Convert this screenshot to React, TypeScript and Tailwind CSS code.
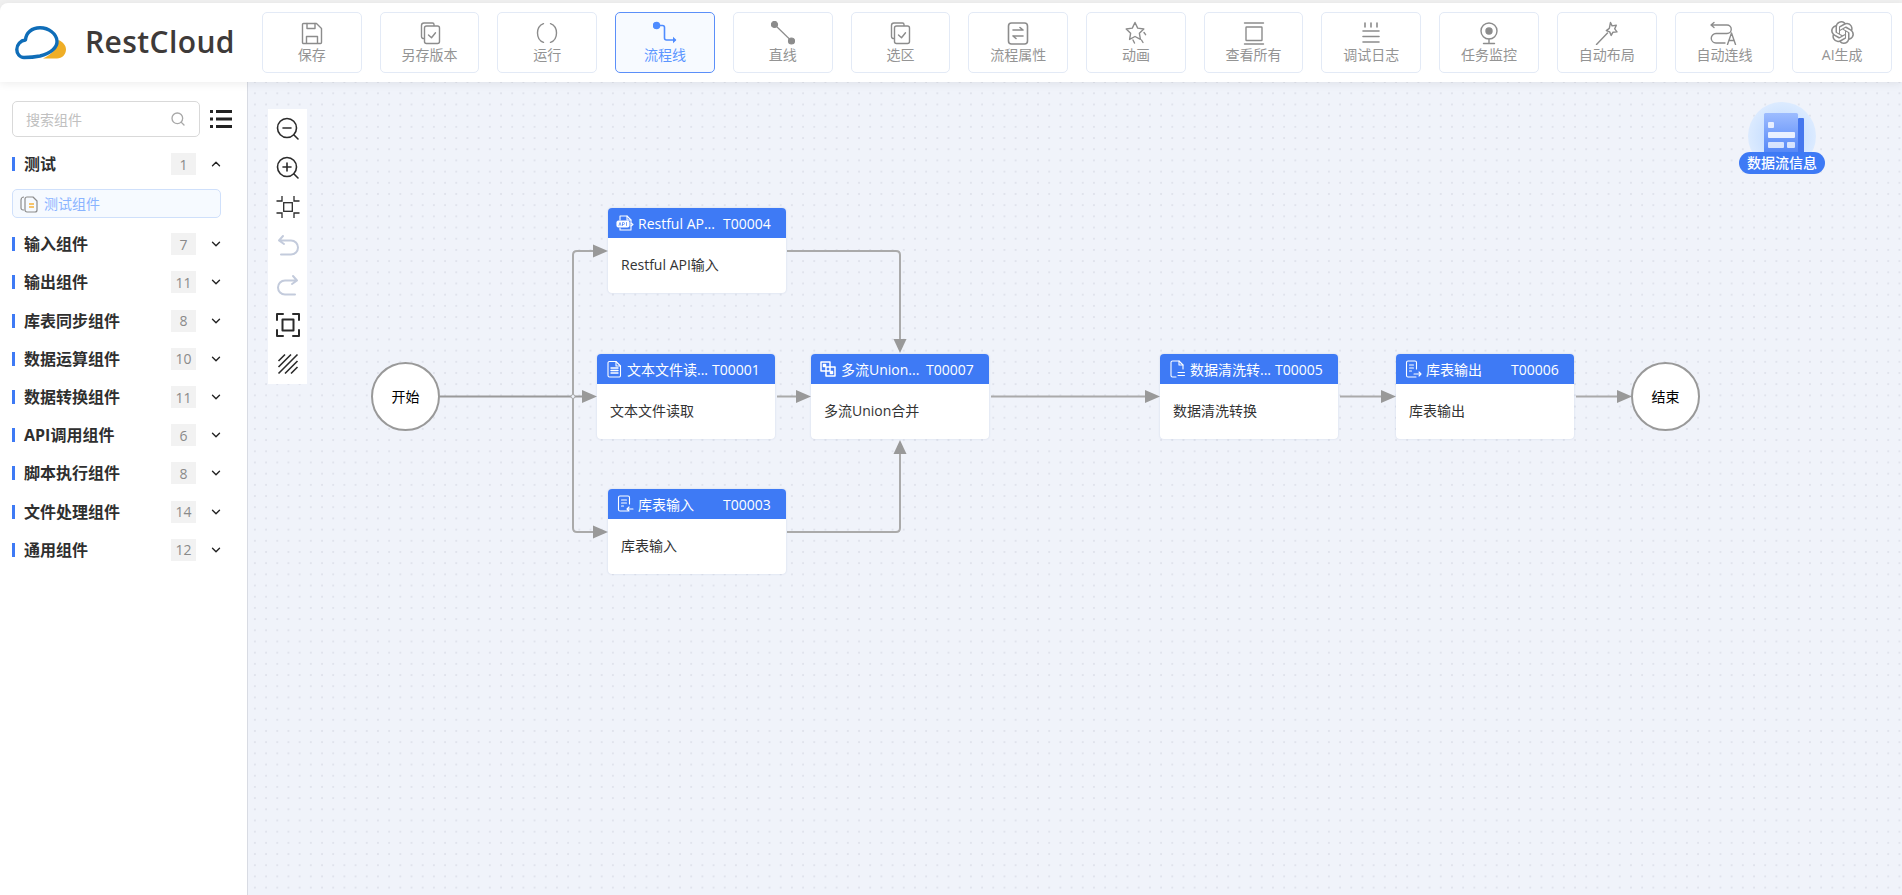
import React from "react";
import { SiOpenai } from "react-icons/si";
import { Search, ChevronUp, ChevronDown } from "lucide-react";

const G = "#8c8c8c";
const S = ({ children, size = 24, sw = 1.4, c = G }: { children: React.ReactNode; size?: number; sw?: number; c?: string }) => (
  <svg width={size} height={size} viewBox="0 0 24 24" fill="none" stroke={c} strokeWidth={sw} strokeLinecap="round" strokeLinejoin="round">
    {children}
  </svg>
);

const tools: { label: string; active?: boolean; icon: React.ReactNode }[] = [
  { label: "保存", icon: <S><path d="M2.5 3.5a1 1 0 0 1 1-1h13l5 5v14a1 1 0 0 1-1 1h-17a1 1 0 0 1-1-1z" /><path d="M7 2.5v5h8v-5M6.5 22v-6.5h11V22" /></S> },
  { label: "另存版本", icon: <S><path d="M16 4.5V3.5a1.5 1.5 0 0 0-1.5-1.5H6A2.5 2.5 0 0 0 3.5 4.5v11A2 2 0 0 0 6 17.5" /><rect x="6.5" y="5" width="15" height="17.5" rx="2" /><path d="M10.5 14l3 2.8 4-5" /></S> },
  { label: "运行", icon: <S><path d="M8.5 2.6C4.8 4 2.5 7.6 2.5 12s2.3 8 6 9.4M15.5 2.6c3.7 1.4 6 5 6 9.4s-2.3 8-6 9.4" /></S> },
  { label: "流程线", active: true, icon: <svg width="24" height="24" viewBox="0 0 24 24" fill="none" stroke="#4f8cff" strokeWidth="1.6" strokeLinecap="round" strokeLinejoin="round"><circle cx="3.5" cy="4.5" r="3" fill="#4f8cff" /><path d="M6 4.5h3.5a2 2 0 0 1 2 2V17a2 2 0 0 0 2 2H22" /><path d="M20 15.8v6.4l3.4-3.2z" fill="#4f8cff" stroke="none" /></svg> },
  { label: "直线", icon: <svg width="24" height="24" viewBox="0 0 24 24" fill={G} stroke={G} strokeWidth="1.2"><circle cx="3.5" cy="3.5" r="3" /><circle cx="20.5" cy="20" r="3" /><path d="M3.5 3.5 20.5 20" /></svg> },
  { label: "选区", icon: <S><path d="M16 4.5V3.5a1.5 1.5 0 0 0-1.5-1.5H6A2.5 2.5 0 0 0 3.5 4.5v11A2 2 0 0 0 6 17.5" /><rect x="6.5" y="5" width="15" height="17.5" rx="2" /><path d="M10.5 14l3 2.8 4-5" /></S> },
  { label: "流程属性", icon: <S sw={1.6}><rect x="2.5" y="2" width="19" height="21" rx="3" /><path d="M7 9h10M14 6.5 17 9M7 15h10M10 17.5 7 15" /></S> },
  { label: "动画", icon: <S><path d="M11 1.5l2.7 5.6 6.1.9-4.4 4.3 1 6.1-5.4-2.9-5.4 2.9 1-6.1L2.2 8l6.1-.9z" /><path d="M20 11.5l1.6 2.2M17.5 19l1.5 2.5M9 19l1.5 3" /></S> },
  { label: "查看所有", icon: <S><path d="M2.5 2h19M2.5 23h19" /><rect x="4" y="6" width="16" height="13.5" rx="0.5" /></S> },
  { label: "调试日志", icon: <S sw={1.6}><path d="M6 2v4M12 2v4M18 2v4M4 10h16M4 15.5h16M4 21h16" /></S> },
  { label: "任务监控", icon: <S><circle cx="12" cy="10" r="8" /><circle cx="12" cy="10" r="3" fill={G} /><path d="M12 18v4M6.5 22.5h11" /></S> },
  { label: "自动布局", icon: <S><path d="M1.5 23.5 12.5 12" /><path d="M15.5 1.5l1.6 3.4 4.2-.6-1.6 3.6 2.3 3-4 .3-1.8 3.2-1.5-3.5-3.4-1.3 3-2.2z" /></S> },
  { label: "自动连线", icon: <svg width="28" height="24" viewBox="0 0 28 24" fill="none" stroke={G} strokeWidth="1.4" strokeLinecap="round" strokeLinejoin="round"><path d="M4 1.5 1 4l3 2.5M1 4h16a4.2 4.2 0 0 1 0 8.5H6a4.7 4.7 0 0 0 0 9.5h9" /><path d="M17.5 23.5l4-11.5 4 11.5M19 19.5h5" /></svg> },
  { label: "AI生成", icon: <SiOpenai size={23} color={G} /> },
];

const groups: { name: string; n: number; open?: boolean }[] = [
  { name: "测试", n: 1, open: true },
  { name: "输入组件", n: 7 },
  { name: "输出组件", n: 11 },
  { name: "库表同步组件", n: 8 },
  { name: "数据运算组件", n: 10 },
  { name: "数据转换组件", n: 11 },
  { name: "API调用组件", n: 6 },
  { name: "脚本执行组件", n: 8 },
  { name: "文件处理组件", n: 14 },
  { name: "通用组件", n: 12 },
];

const D = "#2b2b2b";
const canvasTools: React.ReactNode[] = [
  <S sw={1.6} c={D}><circle cx="11" cy="11" r="9.5" /><path d="M7 11h8M18 18l4 4" /></S>,
  <S sw={1.6} c={D}><circle cx="11" cy="11" r="9.5" /><path d="M7 11h8M11 7v8M18 18l4 4" /></S>,
  <svg width="24" height="24" viewBox="0 0 24 24" fill="none" stroke={D} strokeWidth="1.300"><rect x="7.700" y="7.700" width="8.600" height="8.600" /><path d="M6 1v5H0.500M18 1v5h5.500M6 23v-5H0.500M18 23v-5h5.500" /></svg>,
  <S sw={2} c="#c3cbdc"><path d="M7 2 3 6.500 8 10M3.500 6.500H15a6.500 6.500 0 0 1 0 14H5" /></S>,
  <S sw={2} c="#c3cbdc"><path d="M17 2l4 4.500L16 10M20.500 6.500H9a6.500 6.500 0 0 0 0 14h10" /></S>,
  <S sw={2} c={D}><rect x="6.500" y="6.500" width="11" height="11" /><path d="M7 1H1v6M17 1h6v6M7 23H1v-6M17 23h6v-6" /></S>,
  <svg width="24" height="24" viewBox="0 0 24 24" fill="none" stroke={D} strokeWidth="1.600"><path d="M2.500 9 9 2.500M2.500 15 15 2.500M2.500 21.500 21.500 2.500M9 21.500 21.500 9M15 21.500 21.500 15" /></svg>,
];

const W = "#ffffff";
const NI = ({ children }: { children: React.ReactNode }) => (
  <svg width="18" height="18" viewBox="0 0 18 18" fill="none" stroke={W} strokeWidth="1.1" strokeLinecap="round" strokeLinejoin="round">{children}</svg>
);
const nodes = [
  { pos: "left-[360px] top-[126px]", title: "Restful AP...", id: "T00004", body: "Restful API输入", icon: <NI><path d="M4 6V2h7l4 4v10H4v-2" /><rect x="1" y="7" width="12" height="6" rx="1.500" fill={W} /><path d="M11 2v4h4" /><path d="M15 9l2 1.500-2 1.500" /><path d="M3 11.500 4 8.500l1 3M6.500 11.500v-3h1a1 1 0 0 1 0 2h-1M10.500 8.500v3" stroke="#3e7af5" strokeWidth="0.7" /></NI> },
  { pos: "left-[349px] top-[272px]", title: "文本文件读...", id: "T00001", body: "文本文件读取", icon: <NI><path d="M3 3a1.500 1.500 0 0 1 1.500-1.500H11L15.500 6v9.500A1.500 1.500 0 0 1 14 17H4.500A1.500 1.500 0 0 1 3 15.500z" /><path d="M11 1.500V6h4.500" /><path d="M6 8h7M6 10.500h7M6 13h7" strokeWidth="1.400" /></NI> },
  { pos: "left-[563px] top-[272px]", title: "多流Union...", id: "T00007", body: "多流Union合并", icon: <svg width="18" height="18" viewBox="0 0 18 18" fill="none" stroke={W} strokeWidth="1.500" strokeLinejoin="round"><path d="M2 2h9v5h5v9H7v-5H2z" /><path d="M7 7h4v4H7z" /><rect x="4.500" y="4.500" width="2" height="2" fill={W} /><rect x="11.500" y="11.500" width="2" height="2" fill={W} /></svg> },
  { pos: "left-[360px] top-[407px]", title: "库表输入", id: "T00003", body: "库表输入", icon: <NI><path d="M12 16H4a1.500 1.500 0 0 1-1.500-1.500v-12A1.500 1.500 0 0 1 4 1h8a1.500 1.500 0 0 1 1.500 1.500V9" /><path d="M5.500 5h5M5.500 8h5M5.500 11h2M17 14h-6M13 12l-2 2 2 2" /></NI> },
  { pos: "left-[912px] top-[272px]", title: "数据清洗转...", id: "T00005", body: "数据清洗转换", icon: <NI><path d="M8 17H4.500A1.500 1.500 0 0 1 3 15.500v-13A1.500 1.500 0 0 1 4.500 1H11l4 4v4" /><path d="M11 1v4h4M10 12.500h6.500M10 15.500h6.500" /></NI> },
  { pos: "left-[1148px] top-[272px]", title: "库表输出", id: "T00006", body: "库表输出", icon: <NI><path d="M12 17H4a1.500 1.500 0 0 1-1.500-1.500v-13A1.500 1.500 0 0 1 4 1h7a1.500 1.500 0 0 1 1.500 1.500V9" /><path d="M5.500 5h4M5.500 8h4M5.500 11h2M10 14h7M15 12l2 2-2 2" /></NI> },
];

const A = "#999999";
const arrows = [
  "M345 162.500 360 169 345 175.500z",
  "M334 308 349 314.500 334 321z",
  "M345 443.500 360 450 345 456.500z",
  "M645.500 257 652 271 658.500 257z",
  "M645.500 372 652 358 658.500 372z",
  "M548 308 563 314.500 548 321z",
  "M897 308 912 314.500 897 321z",
  "M1133 308 1148 314.500 1133 321z",
  "M1369 308 1384 314.500 1369 321z",
];
const lines = [
  "M192 314.500H335",
  "M325 314.500V173Q325 169 329 169H346",
  "M325 314.500V446Q325 450 329 450H346",
  "M539 169H648Q652 169 652 173V258",
  "M539 450H648Q652 450 652 446V371",
  "M529 314.500H549",
  "M743 314.500H898",
  "M1092 314.500H1134",
  "M1328 314.500H1370",
];

export default function App() {
  return (
    <div className="flex h-screen w-full flex-col overflow-hidden bg-[#f0f0f0] pt-[3px] font-['Open_Sans','Noto_Sans_CJK_SC',sans-serif]">
      <header className="relative z-10 flex h-[79px] shrink-0 items-center rounded-tl-lg bg-white pr-[10px] shadow-[0_2px_8px_rgba(0,0,0,0.07)]">
        <div className="flex w-[262px] shrink-0 items-center pl-[15px]">
          <svg width="52" height="34" viewBox="0 0 52 34" className="shrink-0">
            <path d="M28 32.500H42C47 32.500 51 28.500 51 23.500C51 19.500 48 15.800 43.500 14C43 22 36 29 28 32.500Z" fill="#efae26" />
            <path d="M9 31.500C4.500 31.500 1.800 27.500 1.800 23.500C1.800 18.500 5.500 14.500 10.500 14C11 6.500 17 1.800 25 1.800C34 1.800 41.500 8 42 15C42.500 21.500 35.500 27.500 25 30C20 31 14 31.500 9 31.500Z" fill="none" stroke="#0f6db8" strokeWidth="3.400" strokeLinejoin="round" />
          </svg>
          <span className="-mt-[1px] ml-[18px] text-[30px] leading-none font-semibold tracking-[0.4px] text-[#3e3a39]">RestCloud</span>
        </div>
        <div className="flex min-w-0 flex-1 gap-[18px]">
          {tools.map((t) => (
            <div
              key={t.label}
              className={`flex h-[61px] min-w-0 flex-1 flex-col items-center rounded-[5px] border pt-[7px] ${t.active ? "border-[#5b8ff9] bg-[#f7faff]" : "border-[#e3eaf6] bg-white"}`}
            >
              <div className="flex h-[25px] items-center justify-center">{t.icon}</div>
              <span className={`text-[14px] leading-[20px] ${t.active ? "text-[#5b96ff]" : "text-[#949494]"}`}>{t.label}</span>
            </div>
          ))}
        </div>
      </header>

      <div className="flex min-h-0 flex-1">
        <aside className="w-[248px] shrink-0 border-r border-[#d8dbe3] bg-white">
          <div className="flex items-center pt-[19px] pl-[12px]">
            <div className="flex h-[36px] w-[188px] items-center justify-between rounded-[5px] border border-[#d9d9d9] pr-[13px] pl-[13px]">
              <span className="text-[14px] text-[#c0c0c0]">搜索组件</span>
              <Search size={16} color="#a8a8a8" />
            </div>
            <svg width="22" height="20" viewBox="0 0 22 20" className="ml-[10px]">
              <g fill="#222222">
                <rect x="0" y="1" width="3" height="3" /><rect x="6" y="1" width="16" height="3" />
                <rect x="0" y="8.500" width="3" height="3" /><rect x="6" y="8.500" width="16" height="3" />
                <rect x="0" y="16" width="3" height="3" /><rect x="6" y="16" width="16" height="3" />
              </g>
            </svg>
          </div>
          <div className="pt-[8px]">
            {groups.map((g) => (
              <React.Fragment key={g.name}>
                <div className="flex h-[38.200px] items-center pl-[12px]">
                  <span className="h-[14px] w-[3px] bg-[#3e7af5]" />
                  <span className="ml-[9px] w-[147px] text-[16px] leading-none font-bold text-[#2f2f2f]">{g.name}</span>
                  <span className="flex h-[22px] w-[25px] items-center justify-center bg-[#f2f2f2] text-[14px] text-[#8a8a8a]">{g.n}</span>
                  <span className="ml-[13px] flex w-[14px] justify-center text-[#222222]">
                    {g.open ? <ChevronUp size={14} strokeWidth={2.4} /> : <ChevronDown size={14} strokeWidth={2.4} />}
                  </span>
                </div>
                {g.open && (
                  <div className="mt-[6px] mb-[7px] ml-[12px] flex h-[29px] w-[209px] items-center rounded-[5px] border border-[#cfe0fb] bg-[#f6faff] pl-[7px]">
                    <svg width="18" height="18" viewBox="0 0 18 18" fill="none" stroke="#8c8c8c" strokeWidth="1.200" strokeLinejoin="round">
                      <path d="M4 15H3a2 2 0 0 1-2-2V5a3 3 0 0 1 3-3" />
                      <path d="M5 4a2 2 0 0 1 2-2h6l4 4v9a2 2 0 0 1-2 2H7a2 2 0 0 1-2-2z" />
                      <path d="M9 9h5M9 12h5" stroke="#f6b23c" strokeWidth="1.500" />
                    </svg>
                    <span className="ml-[6px] text-[14px] text-[#8ab4ff]">测试组件</span>
                  </div>
                )}
              </React.Fragment>
            ))}
          </div>
        </aside>

        <main className="relative min-w-0 flex-1 bg-[#f0f3fa] bg-[radial-gradient(circle,#e0e3ec_0.700px,transparent_1.500px)] bg-[size:11.200px_11.200px] bg-[position:1.300px_-5.500px]">
          <div className="absolute top-[27px] left-[20px] flex h-[275px] w-[39px] flex-col items-center justify-around bg-white">
            {canvasTools.map((ic, i) => (
              <div key={i}>{ic}</div>
            ))}
          </div>

          <svg className="absolute top-0 left-0" width="1654" height="813" fill="none">
            {lines.map((d, i) => (
              <path key={i} d={d} stroke={i === 0 ? "#9a9a9a" : "#aaaaaa"} strokeWidth="2" />
            ))}
            {arrows.map((d, i) => (
              <path key={i} d={d} fill={A} />
            ))}
            <circle cx="325" cy="314.500" r="2" fill="#eff2fa" stroke="#aaaaaa" strokeWidth="1" />
          </svg>

          {nodes.map((n) => (
            <div key={n.id} className={`absolute ${n.pos} h-[85px] w-[178px] overflow-hidden rounded-[4px] bg-white shadow-[0_0_2px_rgba(120,140,190,0.3)]`}>
              <div className="flex h-[30px] items-center bg-[#3e7af5] pl-[8px] text-[14px] text-white">
                <span className="flex w-[22px] shrink-0">{n.icon}</span>
                <span className="w-[85px] shrink-0 whitespace-nowrap">{n.title}</span>
                <span>{n.id}</span>
              </div>
              <div className="pt-[17px] pl-[13px] text-[14px] leading-[20px] text-[#333333]">{n.body}</div>
            </div>
          ))}

          <div className="absolute top-[280px] left-[123px] flex h-[69px] w-[69px] items-center justify-center rounded-full border-[2.500px] border-[#999999] bg-white text-[14px] text-black">开始</div>
          <div className="absolute top-[280px] left-[1383px] flex h-[69px] w-[69px] items-center justify-center rounded-full border-[2.500px] border-[#999999] bg-white text-[14px] text-black">结束</div>

          <div className="absolute top-[20px] left-[1491px] flex w-[86px] flex-col items-center">
            <svg width="68" height="68" viewBox="0 0 68 68" className="-mb-[18px]">
              <defs>
                <radialGradient id="halo" cx="0.5" cy="0.5" r="0.5">
                  <stop offset="0" stopColor="#b9d6ff" />
                  <stop offset="1" stopColor="#dcebff" />
                </radialGradient>
                <linearGradient id="doc" x1="0" y1="0" x2="0" y2="1">
                  <stop offset="0" stopColor="#9dbcff" />
                  <stop offset="1" stopColor="#4b80f6" />
                </linearGradient>
              </defs>
              <circle cx="34" cy="34" r="34" fill="url(#halo)" />
              <rect x="50" y="16" width="6" height="40" rx="1" fill="#4577ee" />
              <rect x="16" y="11" width="34" height="45" rx="1.500" fill="url(#doc)" />
              <rect x="20" y="20" width="6" height="6" rx="1" fill="#ffffff" opacity="0.8" />
              <rect x="20" y="30" width="27" height="6" rx="1" fill="#ffffff" opacity="0.85" />
              <rect x="20" y="40" width="16" height="6" rx="1" fill="#ffffff" opacity="0.75" />
              <rect x="39" y="40" width="8" height="6" rx="1" fill="#ffffff" opacity="0.75" />
            </svg>
            <div className="relative h-[22px] w-[86px] rounded-full bg-[#3e7af5] text-center text-[14px] leading-[22px] font-medium text-white">数据流信息</div>
          </div>
        </main>
      </div>
    </div>
  );
}
